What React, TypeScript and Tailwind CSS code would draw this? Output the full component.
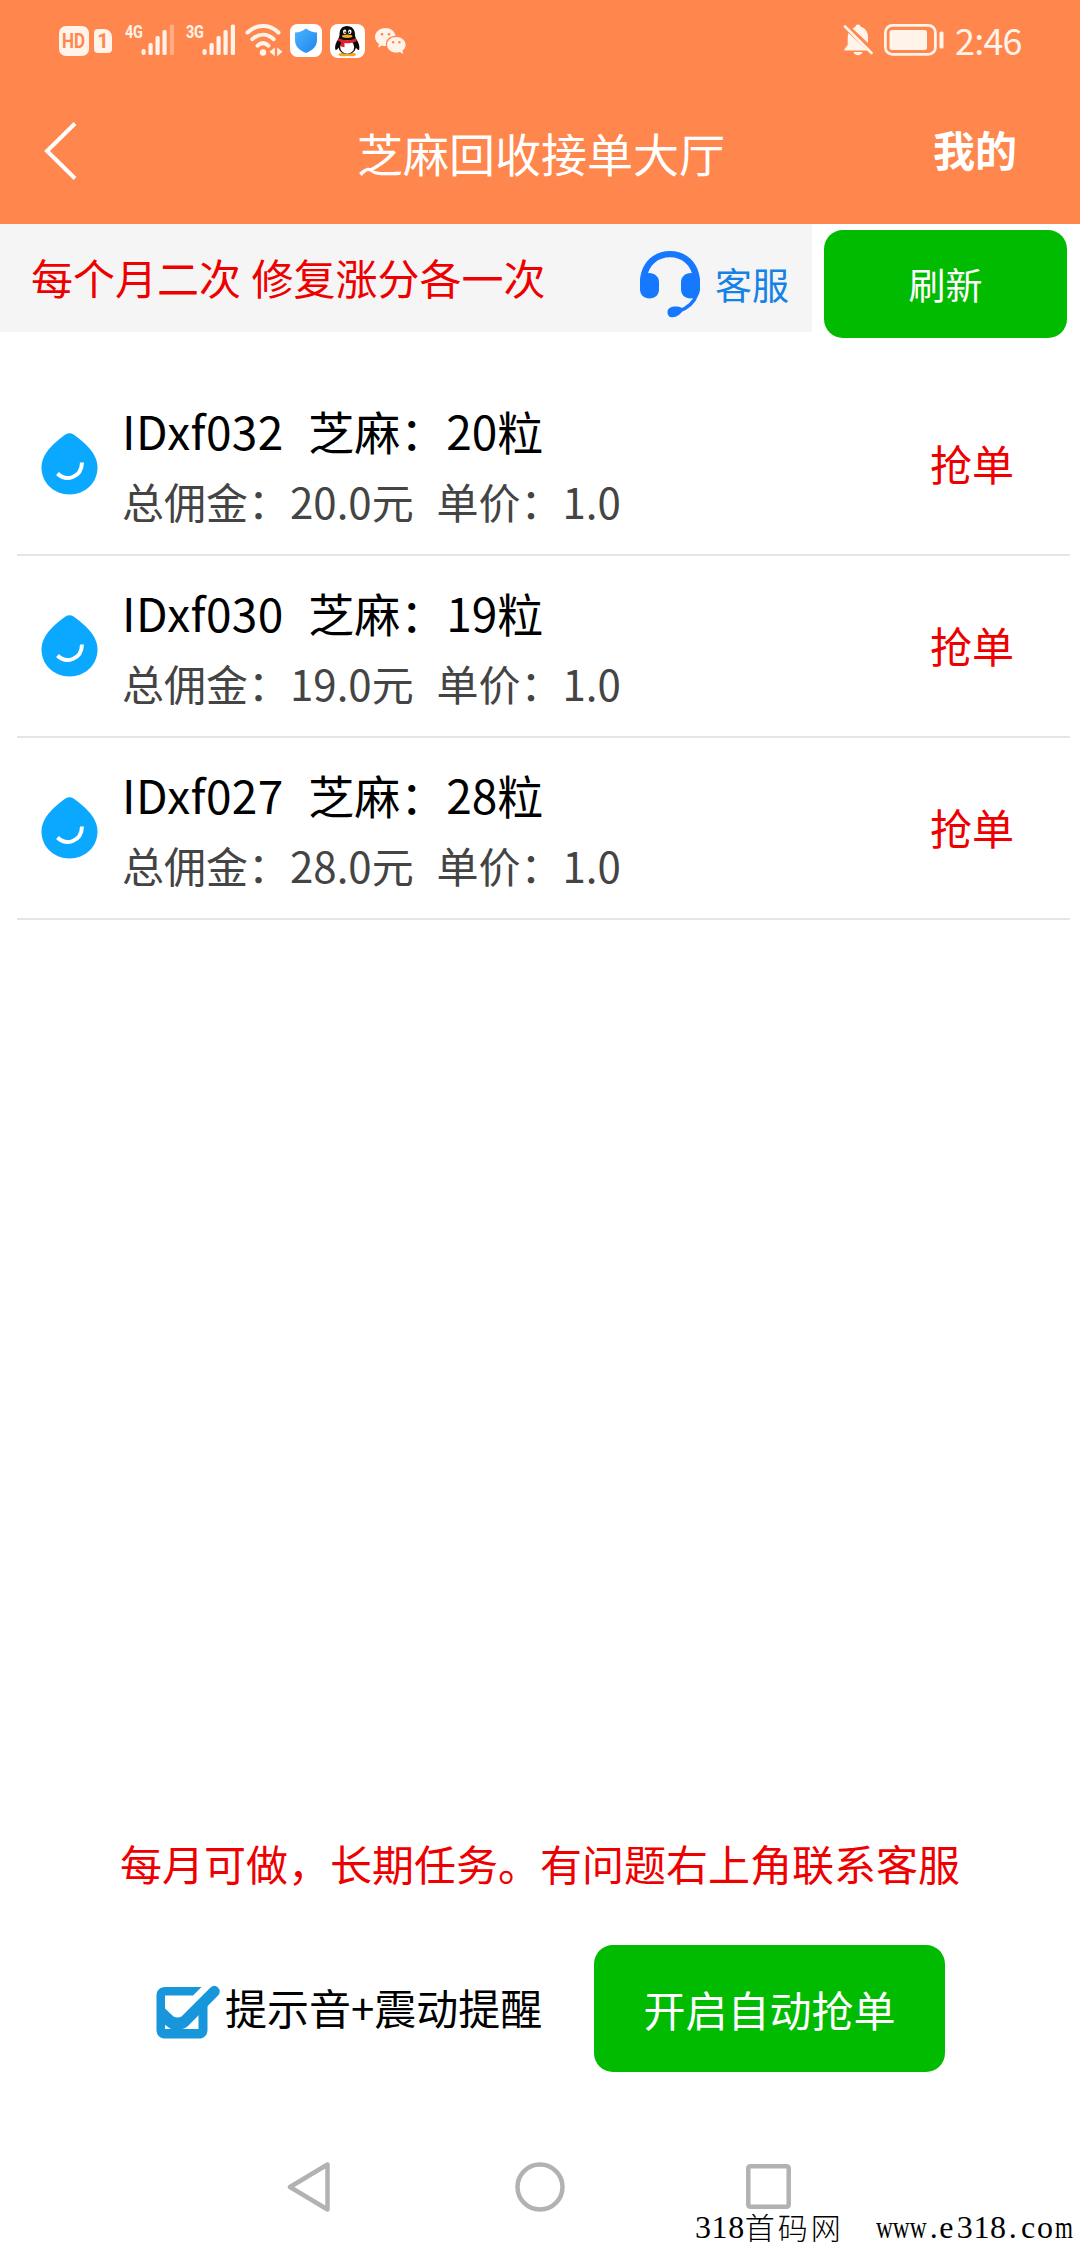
import type { ReactNode } from 'react';

type Order = {
  id: string;
  count: number;
  total: string;
  price: string;
};

const orders: Order[] = [
  { id: 'IDxf032', count: 20, total: '20.0', price: '1.0' },
  { id: 'IDxf030', count: 19, total: '19.0', price: '1.0' },
  { id: 'IDxf027', count: 28, total: '28.0', price: '1.0' },
];

const Signal = ({ label, dimLast }: { label: string; dimLast?: boolean }) => (
  <div className="relative h-8 w-[51px]">
    <span className="absolute left-0 top-0 font-['Roboto'] text-[19px] font-bold leading-[16px] tracking-tight origin-left scale-x-[0.76]">
      {label}
    </span>
    <svg className="absolute left-4 top-0" width="34" height="32" viewBox="0 0 34 32" fill="currentColor">
      <rect x="0.5" y="25" width="4.2" height="6" rx="2" />
      <rect x="7.5" y="19" width="4.2" height="12" rx="1.6" />
      <rect x="14.5" y="12" width="4.2" height="19" rx="1.6" />
      <rect x="21.5" y="6" width="4.2" height="25" rx="1.6" />
      <rect x="28.8" y="0.5" width="4.2" height="30.5" rx="1.6" opacity={dimLast ? 0.35 : 1} />
    </svg>
  </div>
);

const WifiIcon = () => (
  <svg width="40" height="34" viewBox="0 0 40 34" fill="none" stroke="currentColor" strokeWidth="4" strokeLinecap="round">
    <path d="M2.500 8.500C11.500-.2 24.500-.2 33.500 8.500" />
    <path d="M7.300 15.200C14 9.200 22 9.200 28.700 15.200" />
    <path d="M12.500 21.700C16 18.500 20 18.500 23.500 21.700" />
    <circle cx="18" cy="28.500" r="3.200" fill="currentColor" stroke="none" />
    <path d="M29.800 23.500V32.200L24.500 27.850ZM32.200 23.500V32.200L37.500 27.850Z" fill="currentColor" stroke="none" />
  </svg>
);

const ShieldIcon = () => (
  <svg width="32" height="33" viewBox="0 0 32 33">
    <defs>
      <linearGradient id="shield" x1="0" y1="0" x2="1" y2="1">
        <stop offset="0" stopColor="#4cb4fb" />
        <stop offset="1" stopColor="#1f86ee" />
      </linearGradient>
    </defs>
    <rect width="32" height="33" rx="7.500" fill="#fff" />
    <path d="M16 4.500C19.500 7.300 23 8.500 27 8.500V16C27 22.500 22.500 26.500 16 29C9.500 26.500 5 22.500 5 16V8.500C9 8.500 12.500 7.300 16 4.500Z" fill="url(#shield)" />
  </svg>
);

const PenguinIcon = () => (
  <svg width="35" height="34" viewBox="0 0 35 34">
    <rect width="35" height="34" rx="8" fill="#fff" />
    <ellipse cx="13.500" cy="30.500" rx="5" ry="1.800" fill="#f5a81c" />
    <ellipse cx="21" cy="30.500" rx="5" ry="1.800" fill="#f5a81c" />
    <path d="M17 2C12 2 9.500 5.500 9.500 10.500C9.500 12.500 8.800 13.500 8 15.500C6 18.500 4.500 22 5.300 25.500C6 26.500 7.500 25.500 8.500 23.500C9.500 28 13 30 17.200 30C21.500 30 25 28 26 23.500C27 25.500 28.500 26.500 29.200 25.500C30 22 28.500 18.500 26.500 15.500C25.500 13.500 25 12.500 25 10.500C25 5.500 22 2 17 2Z" fill="#0a0a0a" />
    <ellipse cx="17.200" cy="23" rx="7" ry="6.800" fill="#fff" />
    <ellipse cx="14.700" cy="7.800" rx="1.700" ry="2.300" fill="#fff" />
    <ellipse cx="19.800" cy="7.800" rx="1.700" ry="2.300" fill="#fff" />
    <circle cx="15.100" cy="8.200" r="0.800" fill="#000" />
    <circle cx="19.400" cy="8.200" r="0.800" fill="#000" />
    <ellipse cx="17.200" cy="12.200" rx="5.200" ry="1.700" fill="#f5a81c" />
    <path d="M8.500 14.200C14 16.800 21 16.800 26 14.200L26.500 17.200C22 19.300 17.500 19.500 14.500 19V23.200L10.800 22.500L11 18C9.500 17.500 8.500 17 8 16.500Z" fill="#e0202c" />
  </svg>
);

const ChatIcon = () => (
  <svg width="34" height="28" viewBox="0 0 34 28" fill="currentColor">
    <path d="M11.500 1C5.500 1 1 5 1 10C1 13 2.500 15.300 5 17L4 20.500L8.200 18.400C9.500 18.800 10.500 19 12 19C11 13.500 15 9 21.600 8.800C20.800 4.300 16.600 1 11.500 1Z" />
    <path d="M22.300 10C17 10 13 13.500 13 17.800C13 22.200 17 25.600 22.300 25.600C23.600 25.600 24.800 25.400 25.900 25L29.300 26.900L28.400 23.800C30.400 22.400 31.600 20.300 31.600 17.800C31.600 13.500 27.500 10 22.300 10Z" />
    <g fill="#ff864c">
      <circle cx="8" cy="7.300" r="1.300" />
      <circle cx="15" cy="7.300" r="1.300" />
      <circle cx="19.200" cy="15.300" r="1.200" />
      <circle cx="25.400" cy="15.300" r="1.200" />
    </g>
  </svg>
);

const BellOffIcon = () => (
  <svg width="30" height="32" viewBox="0 0 30 32" fill="currentColor">
    <path d="M15 0.500C13 0.500 12.500 1.800 12.500 2.800L9.500 4.500L25 19V13C25 7.500 22 4 17.700 2.800C17.600 1.500 16.800 0.500 15 0.500Z" />
    <path d="M5.500 9L24.500 26.500H1.500V25L4.700 21V13C4.700 11.500 5 10.200 5.500 9Z" />
    <path d="M10.500 28H19.500C18.500 32.200 11.500 32.200 10.500 28Z" />
    <path d="M2 2.500L28.500 29" stroke="currentColor" strokeWidth="2.600" strokeLinecap="round" />
  </svg>
);

const BatteryIcon = () => (
  <svg width="60" height="32" viewBox="0 0 60 32" fill="none">
    <rect x="1.400" y="1.400" width="50" height="29" rx="7" stroke="currentColor" strokeWidth="2.800" />
    <rect x="5.500" y="6" width="37.500" height="20" rx="2.500" fill="currentColor" />
    <rect x="55.500" y="7.500" width="4" height="17" rx="1.500" fill="currentColor" />
  </svg>
);

const HeadsetIcon = () => (
  <svg width="60" height="67" viewBox="0 0 60 67" fill="#1677ff">
    <path d="M0 31C0 13 13 0 30 0S60 13 60 31V34H53V26.500C51 14 42 6.300 30 6.300S9 14 7 26.500V34H0Z" />
    <path d="M0 30C0 25 4 22 9 22C15 22 19 26 19 31V38C19 44 15 47.500 9.500 47.500S0 44 0 38Z" />
    <path d="M60 30C60 25 56 22 51 22C45 22 41 26 41 31V38C41 44 45 47.500 50.500 47.500S60 44 60 38Z" />
    <path d="M57 43C54 51.500 48 57 39 60" fill="none" stroke="#1677ff" strokeWidth="3.600" />
    <path d="M27.500 60.500C28 57 31 55.500 35.500 55.500C40 55.500 43 57 43 58.500C42.500 61.500 37.500 66.300 32.500 66.300C29 66.300 27.300 64 27.500 60.500Z" />
  </svg>
);

const DropIcon = () => (
  <svg width="57" height="62" viewBox="0 0 57 62">
    <path d="M24.500 1.500Q28.500 -1 32.500 1.500C42 8.500 56.500 19.500 56.500 34.500C56.500 50 44 61.500 28.500 61.500S0.500 50 0.500 34.500C0.500 19.500 15 8.500 24.500 1.500Z" fill="#0aa8ff" />
    <path d="M16.500 40.500C25 49 40.500 45 41 29.500" fill="none" stroke="#fff" strokeWidth="4" />
  </svg>
);

const CheckIcon = () => (
  <svg width="65" height="54" viewBox="0 0 65 54" fill="#1896db">
    <path
      fillRule="evenodd"
      d="M45.500 2L37 10.500H9V44H42.500V26L51.500 17V45C51.500 50 48 53.500 43.500 53.500H9C4 53.500 0.500 50 0.500 45V10.500C0.500 5.500 4 2 9 2Z"
    />
    <path d="M8 22.500L17.500 31.500Q21.500 33.500 25.500 31.500L54.500 2.500Q58.500 -1 62 2.500Q65.500 6.500 62 10.500L32 41Q29 44 25 44.500H18Q14 44 12 42L8 39Z" />
  </svg>
);

const GreenButton = ({ className, children }: { className: string; children: ReactNode }) => (
  <button className={`flex items-center justify-center rounded-[19px] bg-[#00bb00] text-white ${className}`}>
    {children}
  </button>
);

const StatusBar = () => (
  <div className="flex h-[82px] items-start pl-[59px] pr-[59px] pt-6 text-[#fff3ea]">
    <div className="mt-0.5 flex h-[30px] w-[30px] items-center justify-center rounded-[7px] bg-[#fff3ea] font-['Roboto'] text-[20px] font-bold leading-none text-[#ff864c]">
      <span className="scale-x-[0.85]">HD</span>
    </div>
    <div className="ml-[5px] mt-[5px] flex h-6 w-[18px] items-center justify-center rounded-[4px] rounded-tr-[8px] bg-[#fff3ea] font-['Roboto'] text-[20px] font-bold leading-none text-[#ff864c]">
      1
    </div>
    <div className="ml-[13px] flex">
      <Signal label="4G" dimLast />
      <div className="ml-2.5"><Signal label="3G" /></div>
    </div>
    <div className="ml-[8px]"><WifiIcon /></div>
    <div className="ml-[5px]"><ShieldIcon /></div>
    <div className="ml-[8px]"><PenguinIcon /></div>
    <div className="ml-[9px] mt-[3px]"><ChatIcon /></div>
    <div className="ml-auto"><BellOffIcon /></div>
    <div className="ml-[11px]"><BatteryIcon /></div>
    <span className="-mt-[2px] ml-[11px] w-[66px] whitespace-nowrap text-[36px] leading-[34px] tracking-[-0.8px]">
      2:46
    </span>
  </div>
);

const OrderRow = ({ order }: { order: Order }) => (
  <div className="ml-[17px] mr-[10px] flex h-[182px] items-start border-b-2 border-[#e5e5e5]">
    <div className="ml-6 mt-[59px] w-[81px]"><DropIcon /></div>
    <div className="flex-1 whitespace-pre">
      <p className="mt-[23px] text-[46px] leading-[66px] text-black [word-spacing:2px]">
        <span className="tracking-[0.4px]">{order.id}</span>{'  '}芝麻：{order.count}粒
      </p>
      <p className="mt-[7px] text-[42px] leading-[62px] text-[#444] [word-spacing:2px]">
        总佣金：{order.total}元{'  '}单价：{order.price}
      </p>
    </div>
    <button className="mr-[56px] mt-[59px] text-[42px] leading-[60px] text-[#ee0000]">抢单</button>
  </div>
);

const App = () => {
  return (
    <div className="relative flex h-[2244px] w-[1080px] flex-col overflow-hidden bg-white font-['Noto_Sans_CJK_SC',sans-serif]">
      <header className="h-[224px] bg-[#ff864c] text-white">
        <StatusBar />
        <div className="grid h-[142px] grid-cols-[357px_366px_357px] items-start">
          <svg className="ml-[43px] mt-[40px]" width="36" height="58" viewBox="0 0 36 58" fill="none" stroke="currentColor" strokeWidth="4">
            <path d="M32 1.500L4 29L32 56.500" />
          </svg>
          <h1 className="mt-[36px] whitespace-nowrap text-[46px] leading-[68px]">芝麻回收接单大厅</h1>
          <span className="mt-[37px] justify-self-end pr-[63px] text-[42px] font-bold leading-[60px]">我的</span>
        </div>
      </header>

      {/* Notice bar */}
      <div className="flex h-[114px] items-start">
        <div className="flex h-[108px] w-[812px] items-start bg-[#f5f5f5] pl-[31px]">
          <p className="mt-[22px] w-[609px] whitespace-nowrap text-[42px] leading-[62px] text-[#ee0000] [word-spacing:1px]">
            每个月二次 修复涨分各一次
          </p>
          <div className="mt-[27px]"><HeadsetIcon /></div>
          <span className="ml-[15px] mt-[33px] text-[37px] leading-[54px] text-[#1482e6]">客服</span>
        </div>
        <GreenButton className="ml-3 mt-[6px] h-[108px] w-[243px] pt-[2px] text-[37px]">刷新</GreenButton>
      </div>

      {/* Order list */}
      <div className="mt-[36px]">
        {orders.map((order) => (
          <OrderRow key={order.id} order={order} />
        ))}
      </div>

      <p className="mt-auto text-center text-[42px] leading-[62px] text-[#ee0000]">
        每月可做，长期任务。有问题右上角联系客服
      </p>

      <div className="mt-[51px] flex h-[127px] items-start pl-[156px]">
        <div className="mt-[40px] w-[69px]"><CheckIcon /></div>
        <span className="mt-[31px] w-[369px] whitespace-nowrap text-[42px] leading-[62px] text-black">提示音+震动提醒</span>
        <GreenButton className="h-[127px] w-[351px] text-[42px]">开启自动抢单</GreenButton>
      </div>

      {/* System navigation */}
      <nav className="mt-[89px] flex h-[83px] items-start pl-[287px] text-[#b2b2b2]">
        <svg width="44" height="52" viewBox="0 0 44 52" fill="none" stroke="currentColor" strokeWidth="4.500" strokeLinejoin="round">
          <path d="M40.500 3.500V48.500L3 26Z" />
        </svg>
        <svg className="ml-[184px]" width="50" height="52" viewBox="0 0 50 52" fill="none" stroke="currentColor" strokeWidth="4.500">
          <circle cx="25" cy="26" r="22.500" />
        </svg>
        <svg className="ml-[181px]" width="45" height="52" viewBox="0 0 45 52" fill="none" stroke="currentColor" strokeWidth="4.500">
          <rect x="2.300" y="5.300" width="40.400" height="40.400" rx="2" />
        </svg>
      </nav>

      {/* Site mark */}
      <div className="absolute bottom-0 left-[695px] flex h-[34px] w-[385px] items-end whitespace-nowrap font-['Liberation_Serif',serif] text-[32px] leading-[33px] text-black">
        <span className="tracking-[0.6px]">318</span>
        <span className="mb-px font-['Noto_Sans_CJK_SC',sans-serif] text-[30px] font-light tracking-[3px]">首码网</span>
        <span className="ml-[32px] w-[54px] shrink-0"><span className="inline-block origin-left scale-x-[0.73]">www</span></span>
        <span className="w-[13px]">.</span>
        <span className="tracking-[3.500px]">e</span>
        <span className="tracking-[0.6px]">318</span>
        <span className="ml-[2px] w-[17px]">.</span>
        <span className="tracking-[2px]">co</span>
        <span className="inline-block origin-left scale-x-[0.72]">m</span>
      </div>
    </div>
  );
};

export default App;
